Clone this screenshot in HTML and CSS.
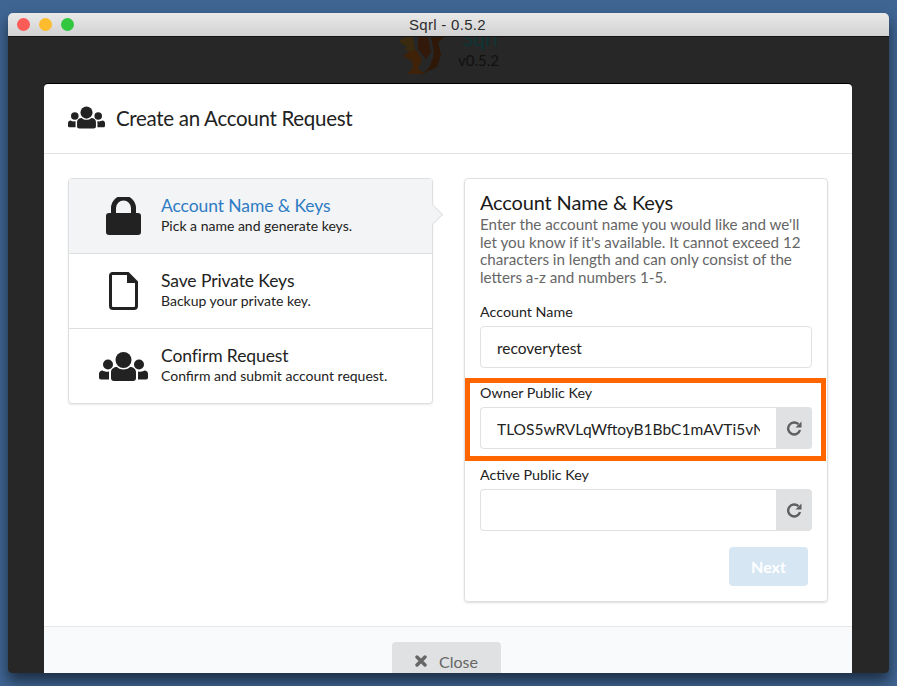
FILE: index.html
```html
<!DOCTYPE html>
<html lang="en">
<head>
    <meta charset="UTF-8">
    <meta name="viewport" content="width=device-width, initial-scale=1.0">
    <title>Sqrl - 0.5.2</title>
    <link rel="stylesheet" href="styles.css">
</head>
<body>
    <svg class="icon-defs" width="0" height="0">
        <symbol id="users" viewBox="0 0 49 29">
            <circle cx="24.5" cy="8" r="8"/>
            <path d="M12 20c0-3 3-5 6-5 2 1.800 4 2.500 6.500 2.500S29 16.800 31 15c3 0 6 2 6 5v6c0 2-1 3-3 3H15c-2 0-3-1-3-3z"/>
            <circle cx="9" cy="12.500" r="5"/>
            <circle cx="40" cy="12.500" r="5"/>
            <path d="M0 22c0-2 1.500-3.500 3.500-3.500 1.500 1 3 1.500 6.500 1v8H2c-1.300 0-2-.7-2-2z"/>
            <path d="M49 22c0-2-1.500-3.500-3.500-3.500-1.500 1-3 1.500-6.500 1v8h8c1.300 0 2-.7 2-2z"/>
        </symbol>
        <symbol id="redo" viewBox="0 0 16 16">
            <path d="M12.400 4.200A6 6 0 1 0 14 10" fill="none" stroke="currentColor" stroke-width="2.400"/>
            <path d="M15.500 1.500V7.500H9.500z" fill="currentColor"/>
        </symbol>
    </svg>

    <div class="window">
        <div class="titlebar">
            <span class="light light-red"></span>
            <span class="light light-yellow"></span>
            <span class="light light-green"></span>
            <span class="window-title">Sqrl - 0.5.2</span>
        </div>
        <div class="app">
            <div class="app-logo">
                <svg class="squirrel" viewBox="0 0 47 37" width="47" height="37">
                    <path d="M1 3 9 0 15 0 16 8 18 14 12 15 5 12 10 11 3 6z" fill="#3a2a10"/>
                    <path d="M10 15 18 13 24 22 20 32 27 37 9 37 15 31 14 24 5 19z" fill="#3f2208"/>
                    <path d="M20 0 30 0 33 15 28 22 20 12z" fill="#33190a"/>
                    <path d="M33 0 47 0 40 5 43 18 39 30 24 37 31 31 35 21 36 14z" fill="#2f1808"/>
                </svg>
                <div class="logo-text">
                    <div class="logo-name">Sqrl</div>
                    <div class="logo-version">v0.5.2</div>
                </div>
            </div>

            <div class="modal">
                <div class="modal-header">
                    <svg class="header-icon"><use href="#users"/></svg>
                    <span>Create an Account Request</span>
                </div>

                <div class="modal-body">
                    <div class="steps">
                        <div class="step step-active">
                            <div class="step-icon">
                                <svg width="35" height="38" viewBox="0 0 35 38">
                                    <path d="M7.500 17V11a10 10 0 0 1 20 0v6" fill="none" stroke="#222" stroke-width="5"/>
                                    <rect y="16" width="35" height="22" rx="3" fill="#222"/>
                                </svg>
                            </div>
                            <div>
                                <div class="step-title">Account Name &amp; Keys</div>
                                <div class="step-desc">Pick a name and generate keys.</div>
                            </div>
                        </div>
                        <div class="step">
                            <div class="step-icon">
                                <svg width="29" height="38" viewBox="0 0 29 38">
                                    <path d="M3.500 1.500H19L27.500 10V34a2.500 2.500 0 0 1-2.500 2.500H4A2.500 2.500 0 0 1 1.500 34V3.500a2 2 0 0 1 2-2z" fill="none" stroke="#222" stroke-width="3"/>
                                    <path d="M18 1.500V11H27.500z" fill="#222"/>
                                </svg>
                            </div>
                            <div>
                                <div class="step-title">Save Private Keys</div>
                                <div class="step-desc">Backup your private key.</div>
                            </div>
                        </div>
                        <div class="step">
                            <div class="step-icon">
                                <svg class="confirm-icon"><use href="#users"/></svg>
                            </div>
                            <div>
                                <div class="step-title">Confirm Request</div>
                                <div class="step-desc">Confirm and submit account request.</div>
                            </div>
                        </div>
                    </div>

                    <div class="panel">
                        <h3>Account Name &amp; Keys</h3>
                        <p>Enter the account name you would like and we'll let you know if it's available. It cannot exceed 12 characters in length and can only consist of the letters a-z and numbers 1-5.</p>

                        <label class="field-label">Account Name</label>
                        <input class="text-input full" type="text" value="recoverytest">

                        <label class="field-label">Owner Public Key</label>
                        <div class="input-group">
                            <input class="text-input" type="text" value="TLOS5wRVLqWftoyB1BbC1mAVTi5vNNj1kFMgh5wsJmxdvXxfSzGdL">
                            <button class="addon"><svg width="16" height="16"><use href="#redo"/></svg></button>
                        </div>

                        <label class="field-label">Active Public Key</label>
                        <div class="input-group">
                            <input class="text-input" type="text">
                            <button class="addon"><svg width="16" height="16"><use href="#redo"/></svg></button>
                        </div>

                        <div class="panel-actions">
                            <button class="next-button">Next</button>
                        </div>
                    </div>
                </div>

                <div class="modal-footer">
                    <button class="close-button">
                        <svg width="12" height="12" viewBox="0 0 12 12"><path d="M2 2l8 8M10 2l-8 8" stroke="currentColor" stroke-width="3.400" stroke-linecap="round"/></svg>
                        Close
                    </button>
                </div>

                <div class="highlight"></div>
            </div>
        </div>
    </div>
</body>
</html>
```

FILE: styles.css
```css
html, body {
    height: 100%;
}

body {
    margin: 0;
    overflow: hidden;
    background: #3f6593;
    font-family: Lato, "Open Sans", sans-serif;
    color: #222;
}

.icon-defs {
    display: block;
    height: 0;
}

.window {
    width: 881px;
    height: 660px;
    margin: 13px 0 0 8px;
    border-radius: 5px 5px 4px 4px;
    overflow: hidden;
    box-shadow: 0 8px 14px rgba(0, 0, 0, 0.55);
    display: flex;
    flex-direction: column;
}

.titlebar {
    flex: none;
    height: 24px;
    display: flex;
    align-items: center;
    gap: 9px;
    padding-left: 9px;
    position: relative;
    background: linear-gradient(#e9e9e9, #d2d2d2);
    border-bottom: 1px solid #151515;
    box-sizing: border-box;
}

.light {
    width: 13px;
    height: 13px;
    border-radius: 50%;
}

.light-red { background: #fc5b57; }
.light-yellow { background: #fdbb2e; }
.light-green { background: #31c840; }

.window-title {
    position: absolute;
    left: 0;
    right: 2px;
    text-align: center;
    font-family: "Liberation Sans", sans-serif;
    font-size: 15px;
    letter-spacing: 0.3px;
    color: #2c2c2c;
}

.app {
    flex: 1;
    position: relative;
    background: #272727;
    padding: 47px 37px 0 36px;
    min-height: 0;
}

.app-logo {
    position: absolute;
    top: 0;
    left: 390px;
    height: 37px;
    width: 112px;
    display: flex;
    overflow: hidden;
}

.logo-text {
    margin-left: 11px;
    width: 45px;
    position: relative;
}

.logo-name {
    position: absolute;
    top: -11px;
    left: 6px;
    font-size: 21px;
    line-height: 24px;
    color: #0f3433;
}

.logo-version {
    position: absolute;
    top: 15px;
    left: 2px;
    font-size: 15px;
    line-height: 17px;
    color: #111;
}

.modal {
    height: 590px;
    position: relative;
    background: #fff;
    border-radius: 4px 4px 0 0;
    box-shadow: 0 -1px 0 #000;
    display: flex;
    flex-direction: column;
}

.modal-header {
    flex: none;
    height: 70px;
    box-sizing: border-box;
    padding: 0 0 2px 24px;
    display: flex;
    align-items: center;
    gap: 11px;
    border-bottom: 1px solid #e2e3e4;
    font-size: 20.500px;
    letter-spacing: -0.3px;
    color: #222;
}

.header-icon {
    width: 37px;
    height: 23px;
    fill: #222;
}

.confirm-icon {
    width: 49px;
    height: 29px;
    fill: #222;
}

.modal-body {
    flex: 1;
    display: flex;
    align-items: flex-start;
    gap: 31px;
    padding: 24px;
    min-height: 0;
}

.steps {
    width: 365px;
    flex: none;
    box-sizing: border-box;
    background: #fff;
    border: 1px solid #dedfe0;
    border-radius: 4px;
    box-shadow: 0 1px 2px rgba(34, 36, 38, 0.1);
}

.step {
    height: 75px;
    box-sizing: border-box;
    display: flex;
    align-items: center;
    padding-bottom: 3px;
    border-bottom: 1px solid #dedfe0;
    position: relative;
}

.step:last-child {
    height: 74px;
    border-bottom: 0;
}

.step-icon {
    width: 92px;
    flex: none;
    box-sizing: border-box;
    padding: 3px 0 0 16px;
    display: flex;
    justify-content: center;
}

.step-active {
    background: #f3f4f5;
}

.step-active::after {
    content: "";
    position: absolute;
    right: -8px;
    top: 28px;
    width: 14px;
    height: 14px;
    background: #f3f4f5;
    border-top: 1px solid #dedfe0;
    border-right: 1px solid #dedfe0;
    transform: rotate(45deg);
}

.step-title {
    font-size: 17.500px;
    letter-spacing: -0.1px;
    line-height: 21px;
    color: #222;
}

.step-active .step-title {
    color: #2e7cc4;
}

.step-desc {
    margin-top: 1px;
    font-size: 14px;
    line-height: 18px;
    color: #222;
}

.panel {
    width: 364px;
    height: 424px;
    flex: none;
    box-sizing: border-box;
    border: 1px solid #dedfe0;
    border-radius: 4px;
    box-shadow: 0 1px 2px rgba(34, 36, 38, 0.15);
    padding: 12px 15px 0;
}

.panel h3 {
    margin: 0 0 3px;
    font-size: 20px;
    font-weight: 400;
    letter-spacing: -0.15px;
    line-height: 22px;
    color: #1a1a1a;
}

.panel p {
    margin: 0 0 17px;
    font-size: 15.200px;
    line-height: 17.600px;
    color: #666;
}

.field-label {
    display: block;
    font-size: 14.300px;
    line-height: 17px;
    margin-bottom: 6px;
    color: #222;
}

.text-input {
    flex: 1;
    min-width: 0;
    height: 42px;
    box-sizing: border-box;
    padding: 1px 16px 0;
    border: 1px solid #e0e1e2;
    border-radius: 4px;
    background: #fff;
    font-family: Lato, sans-serif;
    font-size: 15.500px;
    color: #222;
    outline: 0;
}

.full {
    display: block;
    width: 100%;
    margin-bottom: 16px;
}

.input-group {
    display: flex;
    height: 42px;
    margin-bottom: 17px;
}

.input-group .text-input {
    border-right: 0;
    border-radius: 4px 0 0 4px;
}

.addon {
    width: 36px;
    flex: none;
    padding: 0;
    border: 0;
    border-radius: 0 4px 4px 0;
    background: #e0e1e2;
    color: #5f5f5f;
    display: flex;
    align-items: center;
    justify-content: center;
}

.panel-actions {
    display: flex;
    justify-content: flex-end;
    margin-top: -1px;
    padding-right: 4px;
}

.next-button {
    width: 79px;
    height: 39px;
    border: 0;
    border-radius: 4px;
    background: #d6e6f3;
    color: #fff;
    font-family: Lato, sans-serif;
    font-size: 16px;
    font-weight: 700;
}

.modal-footer {
    flex: none;
    height: 48px;
    box-sizing: border-box;
    border-top: 1px solid #e6e7e8;
    background: #f9fafb;
    display: flex;
    justify-content: center;
    padding-top: 15px;
    overflow: hidden;
}

.close-button {
    width: 109px;
    height: 38px;
    flex: none;
    margin-right: 3px;
    border: 0;
    border-radius: 4px;
    background: #e0e1e2;
    color: #666;
    font-family: Lato, sans-serif;
    font-size: 16px;
    display: flex;
    justify-content: center;
    align-items: center;
    gap: 12px;
}

/* orange box drawn over the owner key field */
.highlight {
    position: absolute;
    left: 421px;
    top: 294px;
    width: 361px;
    height: 83px;
    box-sizing: border-box;
    border: 5px solid #ff6600;
}
```
